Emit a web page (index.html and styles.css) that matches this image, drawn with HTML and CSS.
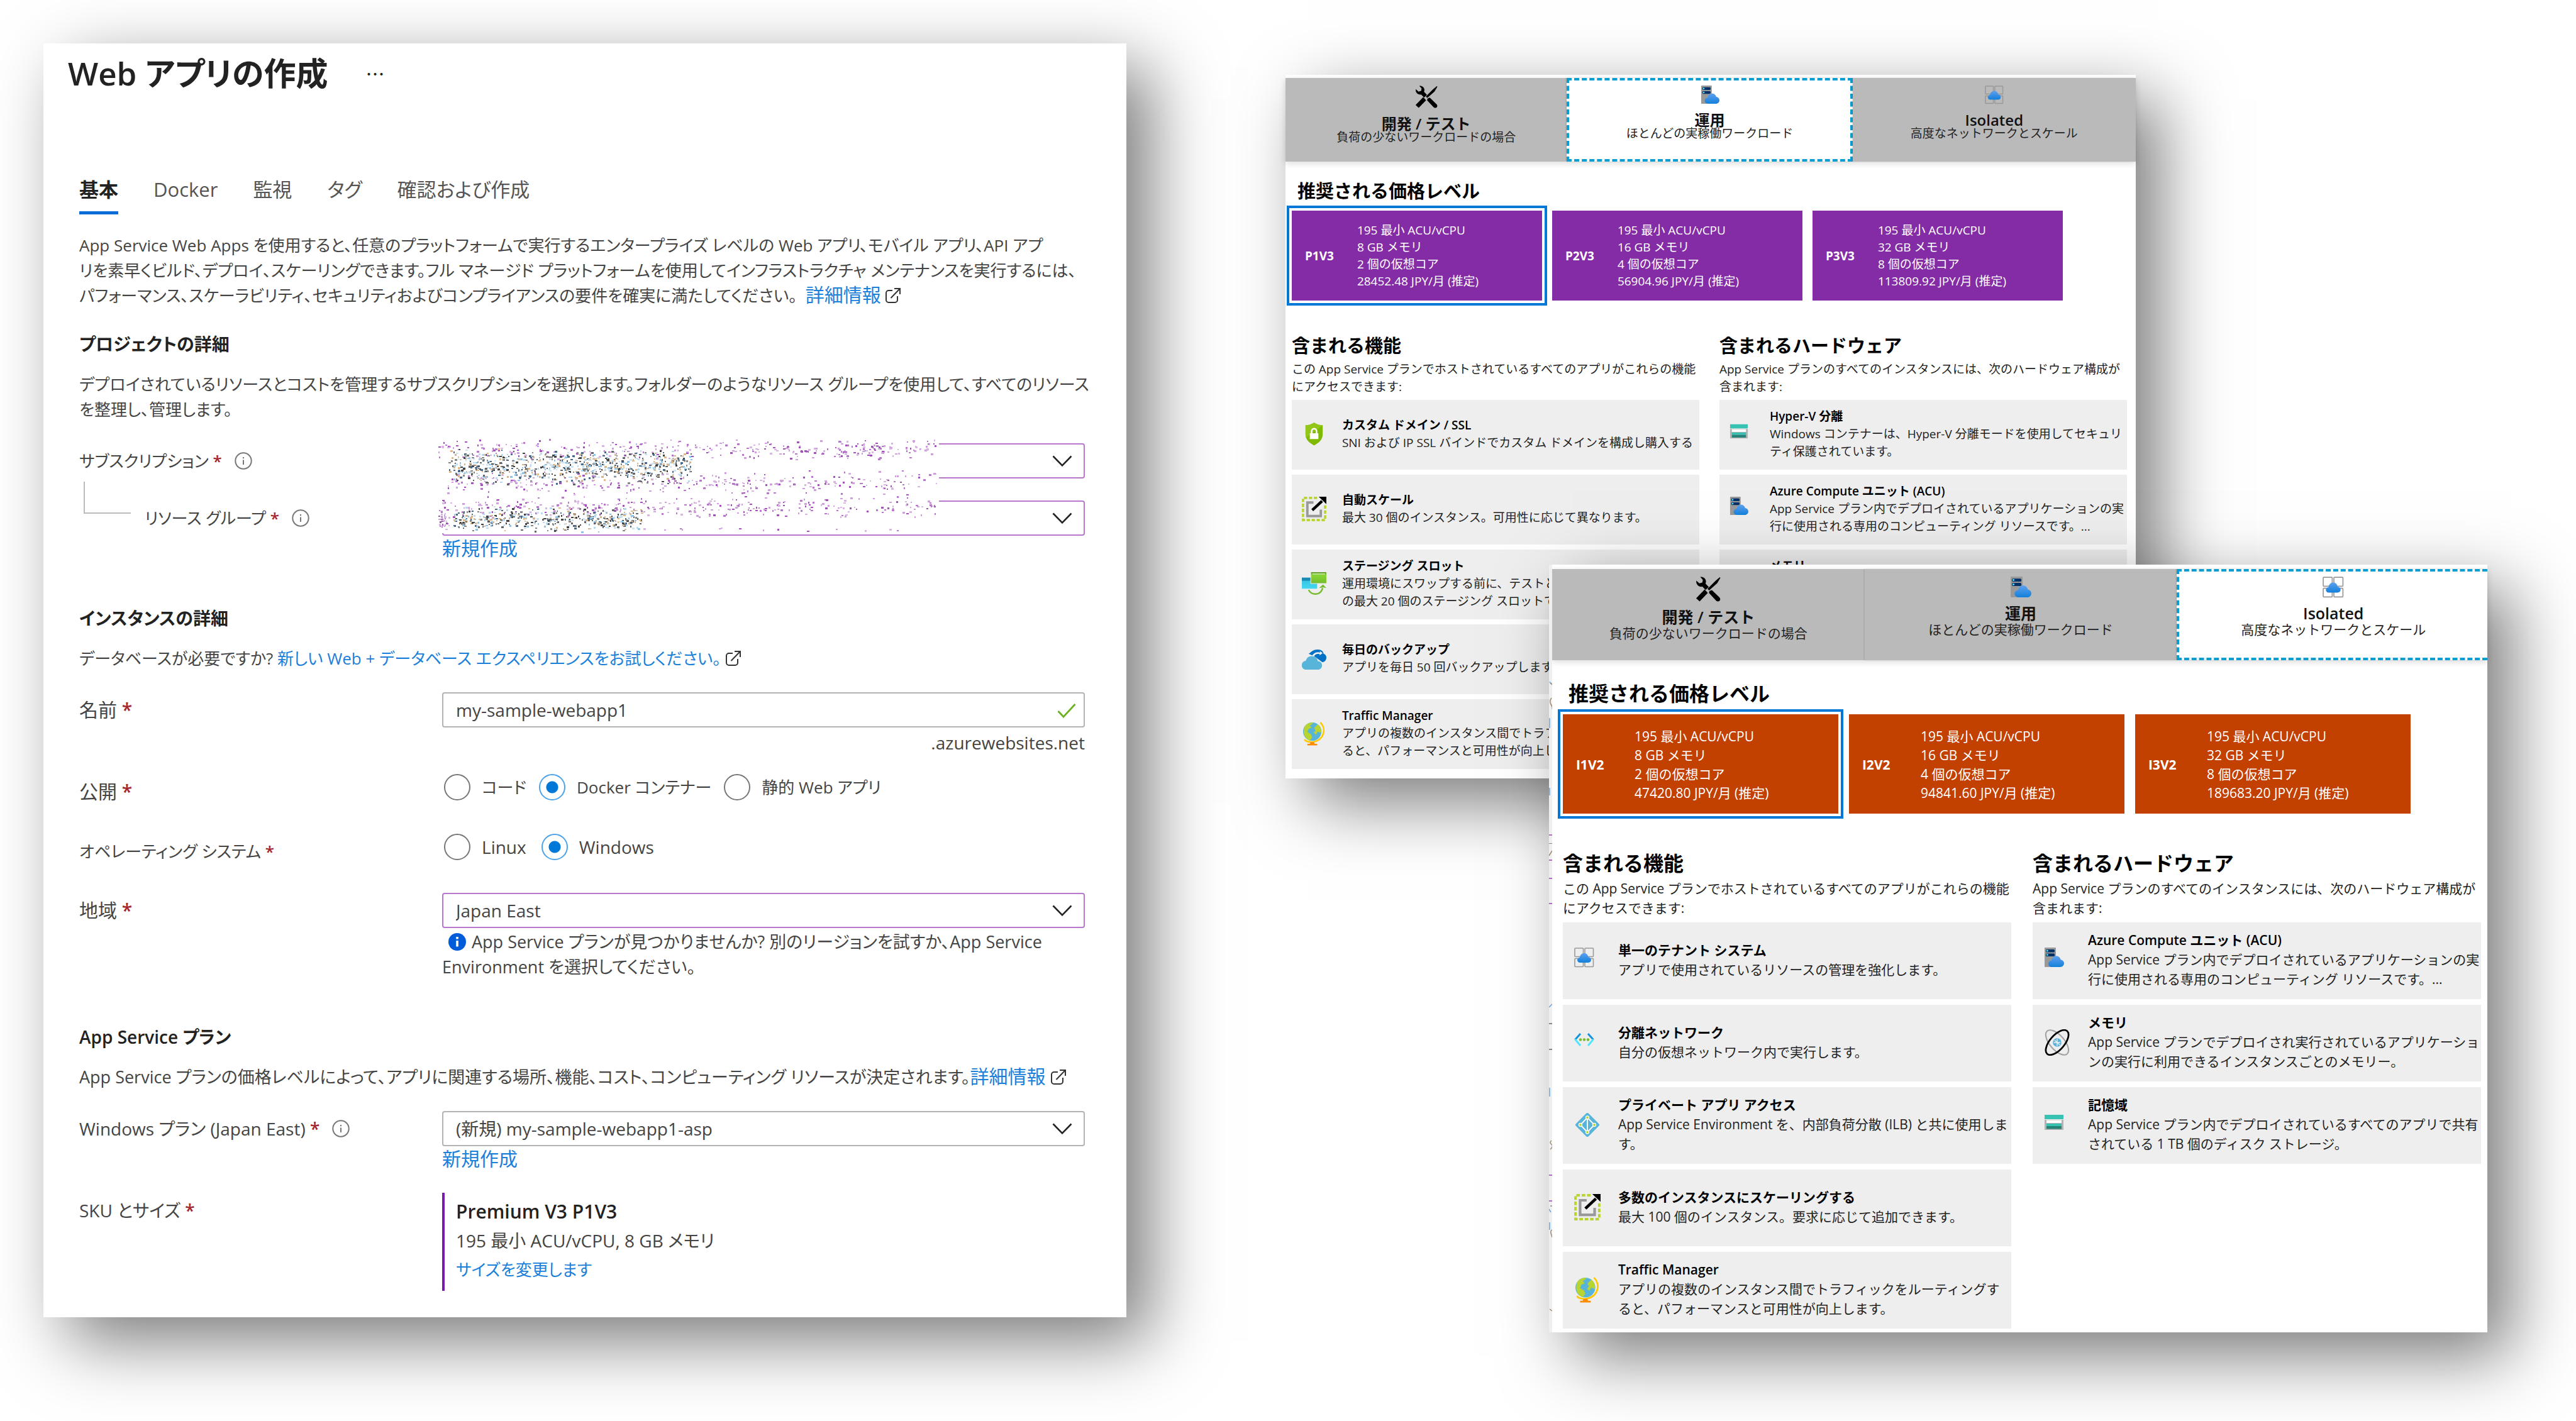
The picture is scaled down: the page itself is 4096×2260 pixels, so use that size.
FILE: index.html
```html
<!DOCTYPE html>
<html lang="ja">
<head>
<meta charset="utf-8">
<title>Web アプリの作成</title>
<link rel="stylesheet" href="styles.css">
</head>
<body>
<svg class="defs" aria-hidden="true">
  <defs>
    <linearGradient id="cloud" x1="0" y1="0" x2="0" y2="1"><stop offset="0" stop-color="#5ea0ef"/><stop offset="1" stop-color="#1380da"/></linearGradient>
    <linearGradient id="sky" x1="0" y1="0" x2="0" y2="1"><stop offset="0" stop-color="#32bedd"/><stop offset="1" stop-color="#45d8f2"/></linearGradient>
    <linearGradient id="leaf" x1="0" y1="0" x2="0" y2="1"><stop offset="0" stop-color="#5e9624"/><stop offset=".3" stop-color="#86d633"/><stop offset="1" stop-color="#76bc2d"/></linearGradient>
    <symbol id="i-info" viewBox="0 0 28 28"><circle cx="14" cy="14" r="12.7" fill="none" stroke="#777" stroke-width="2"/><path d="M14 12.5v7.5M14 8v2.2" stroke="#777" stroke-width="2"/></symbol>
    <symbol id="i-ext" viewBox="0 0 26 26"><path d="M12 5H6a4 4 0 0 0-4 4v11a4 4 0 0 0 4 4h10a4 4 0 0 0 4-4v-6M9.500 17L23 3M15 2h9v9" fill="none" stroke="#333" stroke-width="2"/></symbol>
    <symbol id="i-chev" viewBox="0 0 32 18"><path d="M1.500 1.500L16 16.300 30.500 1.500" fill="none" stroke="#222" stroke-width="2.600"/></symbol>
    <symbol id="i-tools" viewBox="0 0 40 40">
      <path d="M1 34.500L14.500 20.500l5 5.500L6.500 39.500z"/>
      <path d="M7.500 .5C12 0 16 2.500 16.500 7c.2 1.800-.2 3-.6 4.200L21 16.500l-5 4.800-5-5.300C5 17 .5 12.500 1.200 6.500l5 4.300 4.600-1.300.8-4.300z"/>
      <path d="M38.500 1l1 1-5 8.500-12.800 11.500-2.700-2.600L31.500 7z"/>
      <path d="M22 23l4-1.500L38 33c2.500 2.600 1.200 6.500-2.500 6.500-1.500 0-2.500-.8-3.300-1.700L21.300 26z"/>
    </symbol>
    <symbol id="i-server" viewBox="0 0 32 32">
      <rect x="1" y="0" width="18" height="31" rx="1" fill="#999"/><rect x="3" y="3" width="14" height="4.500" rx="1.500" fill="#003067"/><rect x="3" y="9.500" width="14" height="4.500" rx="1.500" fill="#003067"/><circle cx="5.300" cy="5.200" r="1.400" fill="#50e6ff"/><circle cx="5.300" cy="11.700" r="1.400" fill="#50e6ff"/>
      <path d="M13 31c-3.500 0-6-2.300-6-5.300 0-2.900 2-5 5-5.300C12.600 16 15.800 13.500 19.500 13.500c3.500 0 6.300 2.100 7 5.700 3 .4 5.500 2.800 5.500 5.900 0 3.300-2.700 5.900-6 5.900z" fill="url(#cloud)"/>
    </symbol>
    <symbol id="i-iso" viewBox="0 0 32 32">
      <g fill="none" stroke="#999" stroke-width="1.600"><rect x="1" y="1" width="13.500" height="13.500" rx="1"/><rect x="17" y="1" width="13.500" height="13.500" rx="1"/><rect x="1" y="17.500" width="13.500" height="13" rx="1"/><rect x="17" y="17.500" width="13.500" height="13" rx="1"/></g>
      <path d="M9.500 24c-2.700 0-4.500-1.800-4.500-4 0-2.300 1.600-3.900 3.800-4.100C9.600 11.500 12.300 9 16 9c3.600 0 6 2.300 6.500 6.300 2.600.2 4.500 1.900 4.500 4.300 0 2.600-2 4.400-4.600 4.400z" fill="url(#cloud)"/>
    </symbol>
    <symbol id="i-shield" viewBox="0 0 40 40"><path d="M20 1c5 3.500 9 4.300 14 4.300V20c0 9-6 14-14 18.500C12 34 6 29 6 20V5.300C11 5.300 15 4.500 20 1z" fill="#7fba00"/><path d="M20 1c5 3.500 9 4.300 14 4.300L7 26C6.300 24 6 22 6 20V5.300C11 5.300 15 4.500 20 1z" fill="#92c71a"/><path d="M13 18.500h14v9.500H13z" fill="#fff"/><path d="M16 19v-4a4 4 0 0 1 8 0v4" fill="none" stroke="#fff" stroke-width="2.600"/></symbol>
    <symbol id="i-scale" viewBox="0 0 40 40"><path d="M25 2H2v36h36V12" fill="none" stroke="#b8d432" stroke-width="3.800" stroke-dasharray="5.500 2.600"/><path d="M19 9.500H9v22h22V21" fill="none" stroke="#999" stroke-width="4"/><path d="M17 22L33 7" stroke="#000" stroke-width="4.500"/><path d="M27.500 0H40v12z"/></symbol>
    <symbol id="i-slots" viewBox="0 0 40 40"><rect x="0" y="10" width="25" height="18" fill="url(#sky)"/><rect x="0" y="10" width="25" height="5" fill="#198ab3"/><rect x="14" y="0" width="26" height="20" fill="#eee"/><rect x="15" y="1" width="25" height="18" fill="url(#leaf)"/><path d="M17 4h21" stroke="#d6f0b8" stroke-width="1.500"/><path d="M11 30c5 9 19 10 23-3" fill="none" stroke="#76bc2d" stroke-width="2.600"/><path d="M28 27l6.500-6 5.500 6-5-1z" fill="#76bc2d"/></symbol>
    <symbol id="i-backup" viewBox="0 0 40 40"><path d="M11 12c4-2 6-7 15-7 6 0 9 3 9.500 7 4 1.500 5.500 5 4 9-1 3-3 4.500-6 5L20 16z" fill="#0072c6"/><path d="M16 17c2-5 7-9 14-7l-1-2.500 5 3.500-5 3.500v-2c-5-1-8 1-10 5z" fill="#eee"/><path d="M7 38c-4 0-7-3-7-7 0-4.500 3-7 6.500-7.300C7.500 19 11 16 16 16c5.500 0 9 3 10 8 4 .2 7 3 7 7s-3 7-7 7z" fill="#59b4d9"/></symbol>
    <symbol id="i-globe" viewBox="0 0 40 40"><circle cx="17" cy="17" r="15" fill="#59b4d9"/><path d="M5 8c4-5 9-6.500 14-5.500l-6 5 3 3-5 2-2 5 6 4 2 5-4 5C6 29 0 21 5 8zM20 11l6-6c4 3 6.500 8 5.500 14l-6-2-2 5-4-3 3-4z" fill="#b8d432"/><path d="M30 2c11 10 6 30-13 32-5 .3-10-1-13-4" fill="none" stroke="#ffc800" stroke-width="2.600"/><path d="M14 34h6l1 3h4v2.500H9V37h4z" fill="#ff8c00"/></symbol>
    <symbol id="i-vnet" viewBox="0 0 32 32"><g fill="none" stroke-width="3"><path d="M10 6L1.500 15.500" stroke="#1490df"/><path d="M1.500 15L10 25" stroke="#50e6ff"/><path d="M22 6l8.500 9.500" stroke="#1490df"/><path d="M30.500 15L22 25" stroke="#50e6ff"/></g><g fill="#76bc2d"><circle cx="10" cy="15.500" r="2.200"/><circle cx="16" cy="15.500" r="2.200"/><circle cx="22" cy="15.500" r="2.200"/></g></symbol>
    <symbol id="i-ilb" viewBox="0 0 40 40"><rect x="6.500" y="6.500" width="27" height="27" rx="2.500" transform="rotate(45 20 20)" fill="#59b4d9"/><path d="M20 8v23M20 9L9.500 20 20 31M20 9l10.500 11L20 31" fill="none" stroke="#fff" stroke-width="1.800"/><g fill="#b8d432" stroke="#fff" stroke-width="1.200"><circle cx="20" cy="9" r="2.400"/><circle cx="9.500" cy="20" r="2.400"/><circle cx="30.500" cy="20" r="2.400"/><circle cx="20" cy="31" r="2.400"/></g></symbol>
    <symbol id="i-store" viewBox="0 0 32 32"><rect x="1" y="12" width="30" height="16" fill="#b3b3b3"/><rect x="1" y="4" width="30" height="7" fill="#37c2b1"/><rect x="4" y="12.500" width="24" height="4.500" fill="#fff"/><rect x="4" y="18" width="24" height="4" fill="#37c2b1"/><rect x="4" y="22" width="24" height="4.500" fill="#258277"/></symbol>
    <symbol id="i-memory" viewBox="0 0 40 40"><ellipse cx="20" cy="20" rx="11" ry="23" transform="rotate(-41 20 20)" fill="none" stroke="#a0a1a2" stroke-width="2"/><circle cx="20" cy="20" r="6.500" fill="#59b4d9"/><path d="M15 20h10M20 14.500v11M16 16.500l8 7" stroke="#eee" stroke-width="1.300"/><ellipse cx="20" cy="20" rx="11" ry="23" transform="rotate(41 20 20)" fill="none" stroke="#000" stroke-width="2.600"/></symbol>
  </defs>
</svg>

<div class="stage">
  <main class="window create">
    <header class="title-row"><h1>Web アプリの作成</h1><button class="more" aria-label="その他">…</button></header>
    <nav class="tabs">
      <a href="#" class="active">基本</a><a href="#">Docker</a><a href="#">監視</a><a href="#">タグ</a><a href="#">確認および作成</a>
    </nav>
    <form>
      <p class="intro">App Service Web Apps を使用すると、任意のプラットフォームで実行するエンタープライズ レベルの Web アプリ、モバイル アプリ、API アプ<br>リを素早くビルド、デプロイ、スケーリングできます。フル マネージド プラットフォームを使用してインフラストラクチャ メンテナンスを実行するには、<br>パフォーマンス、スケーラビリティ、セキュリティおよびコンプライアンスの要件を確実に満たしてください。 &nbsp;<a href="#" class="kanji">詳細情報</a> <svg class="ext"><use href="#i-ext"/></svg></p>

      <h2 class="first">プロジェクトの詳細</h2>
      <p>デプロイされているリソースとコストを管理するサブスクリプションを選択します。フォルダーのようなリソース グループを使用して、すべてのリソース<br>を整理し、管理します。</p>
      <div class="scope">
        <div class="row kana">
          <label for="sub">サブスクリプション <b>*</b><svg class="info"><use href="#i-info"/></svg></label>
          <div class="pick"><select id="sub" class="touched"><option></option></select><svg class="chev"><use href="#i-chev"/></svg></div>
        </div>
        <div class="row kana nested">
          <label for="rg"><i class="elbow"></i>リソース グループ <b>*</b><svg class="info"><use href="#i-info"/></svg></label>
          <div>
            <div class="pick"><select id="rg" class="touched"><option></option></select><svg class="chev"><use href="#i-chev"/></svg></div>
            <a href="#" class="below kanji">新規作成</a>
          </div>
        </div>
        <svg class="scrub" id="scrub" viewBox="0 0 798 151" aria-hidden="true"></svg>
      </div>

      <h2>インスタンスの詳細</h2>
      <p>データベースが必要ですか? <a href="#">新しい Web + データベース エクスペリエンスをお試しください。</a> <svg class="ext"><use href="#i-ext"/></svg></p>
      <div class="row">
        <label for="name" class="kanji">名前 <b>*</b></label>
        <div>
          <div class="pick"><input id="name" type="text" value="my-sample-webapp1"><svg class="tick" viewBox="0 0 30 24"><path d="M1.500 13l8.500 9L28.500 2" fill="none" stroke="#6bb120" stroke-width="2.800"/></svg></div>
          <div class="suffix">.azurewebsites.net</div>
        </div>
      </div>
      <div class="row publish">
        <span class="label kanji">公開 <b>*</b></span>
        <div class="radios kana">
          <label><input type="radio" name="pub">コード</label>
          <label><input type="radio" name="pub" checked>Docker コンテナー</label>
          <label><input type="radio" name="pub">静的 Web アプリ</label>
        </div>
      </div>
      <div class="row os">
        <span class="label kana">オペレーティング システム <b>*</b></span>
        <div class="radios">
          <label><input type="radio" name="os">Linux</label>
          <label><input type="radio" name="os" checked>Windows</label>
        </div>
      </div>
      <div class="row region">
        <label for="region" class="kanji">地域 <b>*</b></label>
        <div>
          <div class="pick"><select id="region" class="touched"><option>Japan East</option></select><svg class="chev"><use href="#i-chev"/></svg></div>
          <div class="hint"><svg class="info-solid" viewBox="0 0 28 28"><circle cx="14" cy="14" r="14" fill="#015cda"/><path d="M14 12v9.500M14 6v3.500" stroke="#fff" stroke-width="3.600"/></svg>App Service プランが見つかりませんか? 別のリージョンを試すか、App Service<br>Environment を選択してください。</div>
        </div>
      </div>

      <h2>App Service プラン</h2>
      <p class="mixed">App Service プランの価格レベルによって、アプリに関連する場所、機能、コスト、コンピューティング リソースが決定されます。<a href="#" class="kanji">詳細情報</a> <svg class="ext"><use href="#i-ext"/></svg></p>
      <div class="row">
        <label for="plan">Windows プラン (Japan East) <b>*</b><svg class="info"><use href="#i-info"/></svg></label>
        <div>
          <div class="pick"><select id="plan"><option>(新規) my-sample-webapp1-asp</option></select><svg class="chev"><use href="#i-chev"/></svg></div>
          <a href="#" class="below kanji">新規作成</a>
        </div>
      </div>
      <div class="row">
        <span class="label sku-label">SKU とサイズ <b>*</b></span>
        <div class="sku-box"><strong>Premium V3 P1V3</strong><span>195 最小 ACU/vCPU, 8 GB メモリ</span><a href="#" class="kana">サイズを変更します</a></div>
      </div>
    </form>
  </main>

  <section class="window spec prod">
    <div class="spec-tabs">
      <button><svg class="tools"><use href="#i-tools"/></svg><strong>開発 / テスト</strong><span>負荷の少ないワークロードの場合</span></button>
      <button class="on"><svg class="mini"><use href="#i-server"/></svg><strong>運用</strong><span>ほとんどの実稼働ワークロード</span></button>
      <button><svg class="mini"><use href="#i-iso"/></svg><strong>Isolated</strong><span>高度なネットワークとスケール</span></button>
    </div>
    <h2 class="rec">推奨される価格レベル</h2>
    <div class="tiers">
      <button class="tier chosen"><b>P1V3</b><span>195 最小 ACU/vCPU<br>8 GB メモリ<br>2 個の仮想コア<br>28452.48 JPY/月 (推定)</span></button>
      <button class="tier"><b>P2V3</b><span>195 最小 ACU/vCPU<br>16 GB メモリ<br>4 個の仮想コア<br>56904.96 JPY/月 (推定)</span></button>
      <button class="tier"><b>P3V3</b><span>195 最小 ACU/vCPU<br>32 GB メモリ<br>8 個の仮想コア<br>113809.92 JPY/月 (推定)</span></button>
    </div>
    <div class="columns">
      <div>
        <h2>含まれる機能</h2>
        <p>この App Service プランでホストされているすべてのアプリがこれらの機能<br>にアクセスできます:</p>
        <ul>
          <li><svg><use href="#i-shield"/></svg><div><h3>カスタム ドメイン / SSL</h3>SNI および IP SSL バインドでカスタム ドメインを構成し購入する</div></li>
          <li><svg><use href="#i-scale"/></svg><div><h3>自動スケール</h3>最大 30 個のインスタンス。可用性に応じて異なります。</div></li>
          <li><svg><use href="#i-slots"/></svg><div><h3>ステージング スロット</h3>運用環境にスワップする前に、テストと<br>の最大 20 個のステージング スロットで</div></li>
          <li><svg><use href="#i-backup"/></svg><div><h3>毎日のバックアップ</h3>アプリを毎日 50 回バックアップします</div></li>
          <li><svg><use href="#i-globe"/></svg><div><h3>Traffic Manager</h3>アプリの複数のインスタンス間でトラフ<br>ると、パフォーマンスと可用性が向上し</div></li>
        </ul>
      </div>
      <div>
        <h2>含まれるハードウェア</h2>
        <p>App Service プランのすべてのインスタンスには、次のハードウェア構成が<br>含まれます:</p>
        <ul>
          <li><svg class="small"><use href="#i-store"/></svg><div><h3>Hyper-V 分離</h3>Windows コンテナーは、Hyper-V 分離モードを使用してセキュリ<br>ティ保護されています。</div></li>
          <li><svg class="small"><use href="#i-server"/></svg><div><h3>Azure Compute ユニット (ACU)</h3>App Service プラン内でデプロイされているアプリケーションの実<br>行に使用される専用のコンピューティング リソースです。...</div></li>
          <li class="cut"><h3>メモリ</h3></li>
        </ul>
      </div>
    </div>
  </section>

  <section class="window spec isolated">
    <svg class="sliver" viewBox="0 0 5 1221" preserveAspectRatio="none" aria-hidden="true">
      <g fill="#b06cc8"><path d="M0 429h5v2H0zM0 469h5v2H0zM0 498h5v2H0zM0 538h5v2H0zM0 970h5v2H0zM0 1011h5v2H0z"/></g>
      <g fill="#888"><path d="M0 443h5v1H0zM0 729h5v2H0zM0 770h5v2H0z"/></g>
      <g fill="none" stroke="#6fa3d8" stroke-width="1.500"><path d="M1 186l2 4M1 244v16M1 355v12M0 704l5-5M1 832v14M0 1025l3 5M1 1046v12"/></g>
      <g fill="none" stroke="#a08a72" stroke-width="1.500"><path d="M3 188l2 3M4 212q-4 5-1 10t2 8M0 463l5-8M4 916q-4 3 0 6t-2 8M2 1020h3M5 1058q-4 2-1 8l1 4M1 1184l4 3"/></g>
    </svg>
    <div class="spec-tabs">
      <button><svg class="tools"><use href="#i-tools"/></svg><strong>開発 / テスト</strong><span>負荷の少ないワークロードの場合</span></button>
      <button><svg class="mini"><use href="#i-server"/></svg><strong>運用</strong><span>ほとんどの実稼働ワークロード</span></button>
      <button class="on"><svg class="mini"><use href="#i-iso"/></svg><strong>Isolated</strong><span>高度なネットワークとスケール</span></button>
    </div>
    <h2 class="rec">推奨される価格レベル</h2>
    <div class="tiers">
      <button class="tier chosen"><b>I1V2</b><span>195 最小 ACU/vCPU<br>8 GB メモリ<br>2 個の仮想コア<br>47420.80 JPY/月 (推定)</span></button>
      <button class="tier"><b>I2V2</b><span>195 最小 ACU/vCPU<br>16 GB メモリ<br>4 個の仮想コア<br>94841.60 JPY/月 (推定)</span></button>
      <button class="tier"><b>I3V2</b><span>195 最小 ACU/vCPU<br>32 GB メモリ<br>8 個の仮想コア<br>189683.20 JPY/月 (推定)</span></button>
    </div>
    <div class="columns">
      <div>
        <h2>含まれる機能</h2>
        <p>この App Service プランでホストされているすべてのアプリがこれらの機能<br>にアクセスできます:</p>
        <ul>
          <li><svg class="small"><use href="#i-iso"/></svg><div><h3>単一のテナント システム</h3>アプリで使用されているリソースの管理を強化します。</div></li>
          <li><svg class="small"><use href="#i-vnet"/></svg><div><h3>分離ネットワーク</h3>自分の仮想ネットワーク内で実行します。</div></li>
          <li><svg><use href="#i-ilb"/></svg><div><h3>プライベート アプリ アクセス</h3>App Service Environment を、内部負荷分散 (ILB) と共に使用しま<br>す。</div></li>
          <li><svg><use href="#i-scale"/></svg><div><h3>多数のインスタンスにスケーリングする</h3>最大 100 個のインスタンス。要求に応じて追加できます。</div></li>
          <li><svg><use href="#i-globe"/></svg><div><h3>Traffic Manager</h3>アプリの複数のインスタンス間でトラフィックをルーティングす<br>ると、パフォーマンスと可用性が向上します。</div></li>
        </ul>
      </div>
      <div>
        <h2>含まれるハードウェア</h2>
        <p>App Service プランのすべてのインスタンスには、次のハードウェア構成が<br>含まれます:</p>
        <ul>
          <li><svg class="small"><use href="#i-server"/></svg><div><h3>Azure Compute ユニット (ACU)</h3>App Service プラン内でデプロイされているアプリケーションの実<br>行に使用される専用のコンピューティング リソースです。...</div></li>
          <li><svg><use href="#i-memory"/></svg><div><h3>メモリ</h3>App Service プランでデプロイされ実行されているアプリケーショ<br>ンの実行に利用できるインスタンスごとのメモリー。</div></li>
          <li><svg class="small"><use href="#i-store"/></svg><div><h3>記憶域</h3>App Service プラン内でデプロイされているすべてのアプリで共有<br>されている 1 TB 個のディスク ストレージ。</div></li>
        </ul>
      </div>
    </div>
  </section>
</div>
<script src="scrub.js"></script>
</body>
</html>
```
FILE: styles.css
```css
* { box-sizing: border-box; }
body {
  margin: 0;
  background: #fff;
  font-family: "Open Sans", "Noto Sans CJK JP", sans-serif;
}
h1, h2, h3, p, ul { margin: 0; padding: 0; }
h1, h2, h3 { font-weight: 600; }
ul { list-style: none; }
a { color: #1a80d9; text-decoration: none; }
button, input, select { font: inherit; color: inherit; }
button { border: 0; padding: 0; background: none; }
.defs { position: absolute; width: 0; height: 0; }
.stage { position: relative; min-height: 100vh; overflow: hidden; }
.window {
  position: absolute;
  background: #fff;
  white-space: nowrap;
  box-shadow: 38px 38px 104px rgba(0, 0, 0, .52);
}

/* create form */
.create {
  left: 1.685%;
  top: 3.053%;
  width: 42.04%;
  padding: 11px 66px 42px 57px;
  font-size: 28px;
  line-height: 40px;
  color: #444;
  font-feature-settings: "palt";
}
.title-row { display: flex; align-items: center; gap: 60px; margin-left: -18px; color: #222; }
h1 { font-size: 51px; line-height: 72px; }
.more { font-family: "Noto Sans CJK JP", sans-serif; font-size: 30px; line-height: 40px; }
.tabs { display: flex; gap: 56px; margin-top: 129px; font-size: 31px; }
.tabs a { color: #555; padding-bottom: 15px; border-bottom: 5px solid transparent; }
.tabs .active { color: #222; font-weight: 600; border-color: #0a6cd6; }
.create p, .kana { font-size: 26px; }
.create .mixed, .hint { font-size: 27px; }
.kanji { font-size: 30px; }
.create p .kanji { line-height: 30px; }
.intro { margin-top: 29px; }
.create h2 { margin: 71px 0 24px; font-size: 28px; line-height: 40px; color: #222; }
.create .first { margin-top: 37px; }
.ext { width: 26px; height: 26px; vertical-align: -3px; }
.row { display: grid; grid-template-columns: 577px minmax(0, 1fr); margin-top: 34px; }
.row > label, .row > .label { display: flex; align-items: center; height: 56px; white-space: pre; }
.row b { color: #a4262c; font-weight: 600; }
.info { width: 28px; height: 28px; margin-left: 20px; }
.scope { position: relative; }
.nested { margin-top: 35px; }
.elbow { width: 75px; height: 51px; margin: -64px 22px 0 7px; border: solid #bbb; border-width: 0 0 2px 2px; align-self: center; }
.pick { position: relative; }
.pick select, .pick input {
  display: block;
  width: 100%;
  height: 56px;
  padding: 0 20px;
  border: 2px solid #b3b3b3;
  border-radius: 4px;
  background: #fff;
  appearance: none;
}
.pick .touched { border-color: #b978cd; }
.chev { position: absolute; right: 20px; top: 19px; width: 32px; height: 18px; }
.tick { position: absolute; right: 14px; top: 17px; width: 30px; height: 24px; }
.below { display: block; }
.scrub { position: absolute; left: 569px; top: -8px; width: 798px; height: 151px; background: #fff; }
.suffix { margin-top: 4px; text-align: right; }
.publish { margin-top: 30px; }
.os { margin-top: 39px; }
.region { margin-top: 38px; }
.radios { display: flex; align-items: flex-start; gap: 24px; padding-left: 3px; }
.publish .radios { gap: 20px; }
.radios label { display: flex; align-items: center; gap: 18px; height: 42px; }
.radios input {
  appearance: none;
  width: 42px;
  height: 42px;
  margin: 0;
  border: 2px solid #777;
  border-radius: 50%;
}
.radios input:checked { border-color: #4aa3ea; background: radial-gradient(circle, #0078d7 9px, transparent 10px); }
.hint { margin-top: 2px; }
.info-solid { width: 28px; height: 28px; margin: 0 9px 0 10px; vertical-align: -4px; }
.sku-box { display: flex; flex-direction: column; height: 156px; padding: 7px 0 0 18px; border-left: 4px solid #7719aa; line-height: 46px; }
.sku-box strong { font-size: 30px; font-weight: 600; color: #222; }

/* pricing windows */
.prod {
  --text: 19px; --line: 28px; --head: 29px; --head-line: 40px; --tab: 24px;
  --tab-h: 133px; --tier: #842ca5; --tier-w: 398px; --tier-h: 143px; --item: 111px; --pad: 16px; --icon: 39px;
  left: 49.9%;
  top: 5.265%;
  width: 33.01%;
  padding: 5px 0 15px;
}
.isolated {
  --text: 21px; --line: 31px; --head: 32px; --head-line: 44px; --tab: 25px;
  --tab-h: 145px; --tier: #c24000; --tier-w: 438px; --tier-h: 158px; --item: 122px; --pad: 18px; --icon: 42px;
  left: 60.13%;
  top: 39.73%;
  width: 36.43%;
  padding: 7px 0 6px 5px;
}
.spec { font-size: var(--text); line-height: var(--line); color: #222; }
.sliver { position: absolute; left: 0; top: 0; width: 5px; height: 100%; background: #efefef; }
.spec-tabs { display: grid; grid-template-columns: 33.1% 33.6% minmax(0, 1fr); height: var(--tab-h); background: #bababa; box-shadow: 0 3px 10px rgba(0, 0, 0, .14); }
.isolated .spec-tabs { grid-template-columns: 33.4% 33.4% minmax(0, 1fr); }
.spec-tabs button { display: flex; flex-direction: column; align-items: center; padding-top: 12px; line-height: 21px; }
.spec-tabs button + button { box-shadow: -1px 0 2px rgba(0, 0, 0, .12); }
.spec-tabs .on { background: #fff; border: 4px dashed #0a9dd2; padding-top: 8px; }
.isolated .on { border-right: 0; }
.spec-tabs strong { font-size: var(--tab); line-height: 23px; margin-top: 13px; font-weight: 600; color: #111; }
.isolated .spec-tabs button { line-height: 28px; }
.isolated .spec-tabs strong { line-height: 23px; }
.tools { width: 36px; height: 36px; }
.mini { width: 30px; height: 30px; }
.isolated .tools { width: 40px; height: 40px; }
.isolated .mini { width: 34px; height: 34px; }
.spec h2 { font-size: var(--head); line-height: var(--head-line); color: #000; }
.rec { margin: 27px 0 0 19px; }
.isolated .rec { margin: 31px 0 0 26px; }
.tiers { display: flex; gap: 16px; margin: 11px 0 0 10px; }
.isolated .tiers { margin-left: 17px; gap: 17px; }
.tier { display: flex; align-items: center; width: var(--tier-w); height: var(--tier-h); padding-top: 2px; background: var(--tier); color: #fff; text-align: left; line-height: 27px; }
.isolated .tier { line-height: 30px; }
.tier b { width: 104px; padding-left: 21px; font-weight: 700; }
.isolated .tier b { width: 114px; }
.chosen { outline: 4px solid #0078d7; outline-offset: 4px; }
.columns { display: grid; grid-template-columns: repeat(2, minmax(0, 1fr)); gap: 32px; margin: 52px 14px 0 10px; }
.isolated .columns { gap: 34px; margin: 57px 10px 0 17px; }
.columns ul { display: grid; gap: 8px; margin-top: 7px; }
.columns p { margin-top: 3px; }
.isolated .columns ul { gap: 9px; }
.columns li { display: grid; grid-template-columns: calc(80px - var(--pad)) minmax(0, 1fr); align-items: center; height: var(--item); padding: 0 0 2px var(--pad); background: #eee; }
.isolated .columns li { grid-template-columns: 70px minmax(0, 1fr); }
.columns .cut { display: block; padding: 12px 0 0 80px; }
.columns li svg { width: var(--icon); height: var(--icon); }
.columns li .small { width: 30px; height: 30px; margin-bottom: 8px; }
.isolated .columns li .small { width: 32px; height: 32px; }
h3 { font-size: inherit; color: #000; }
```
FILE: scrub.js
```js
// Scatters the specks of the erased subscription and resource group values.
(function () {
  var seed = 7;
  function rnd() { seed = (seed * 16807) % 2147483647; return seed / 2147483647; }
  var inks = ['#444', '#666', '#4a6a8b', '#8fc3e8', '#e0b98a', '#888', '#b9d9ee', '#d2b594', '#cfe4f2'];
  var purple = ['#a552bc', '#b978cd', '#cfa0dd', '#d9b5e4'];
  var out = '';
  function speck(x, y, c) {
    var w = 2 + Math.floor(rnd() * 3), h = 2 + Math.floor(rnd() * 2);
    out += '<rect x="' + Math.round(x) + '" y="' + Math.round(y) + '" width="' + w + '" height="' + h + '" fill="' + c[Math.floor(rnd() * c.length)] + '"/>';
  }
  function band(n, x0, x1, y0, y1, c) {
    for (var i = 0; i < n; i++) speck(x0 + rnd() * (x1 - x0), y0 + (y1 - y0) * (rnd() + rnd()) / 2, c);
  }
  band(330, 2, 794, 0, 34, purple);
  band(300, 2, 794, 50, 90, purple);
  band(330, 2, 794, 90, 126, purple);
  band(30, 2, 18, 110, 148, purple);
  band(14, 325, 760, 140, 149, purple);
  band(820, 18, 404, 14, 74, inks);
  band(460, 26, 325, 108, 149, inks);
  document.getElementById('scrub').innerHTML = out;
})();
```
